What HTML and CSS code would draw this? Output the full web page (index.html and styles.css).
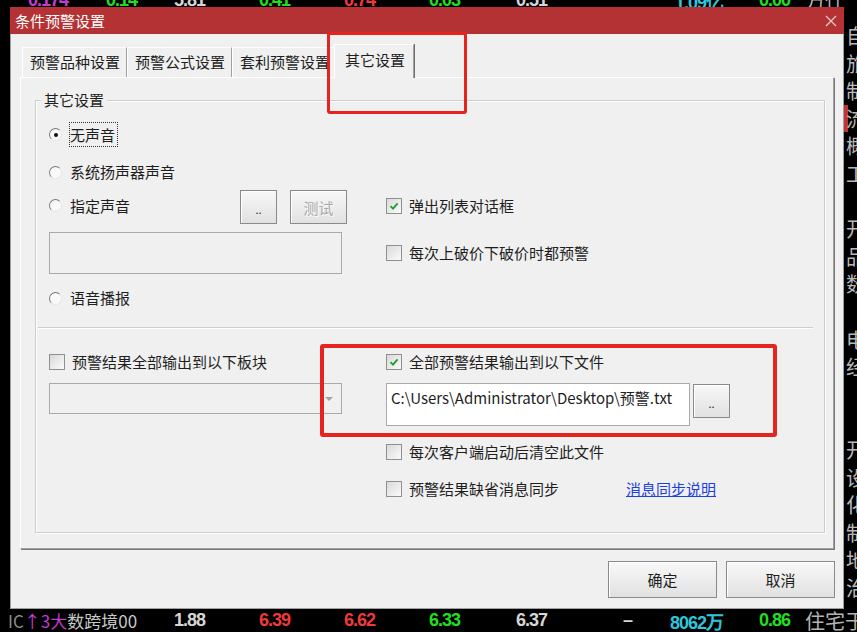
FILE: index.html
```html
<!DOCTYPE html>
<html lang="zh-CN">
<head>
    <meta charset="UTF-8">
    <meta name="viewport" content="width=device-width, initial-scale=1.0">
    <title>条件预警设置</title>

    <link rel="stylesheet" href="styles.css">
</head>
<body>

<!-- quote screen behind the dialog -->
<div class="market">
    <div class="quote-row quote-row--top">
        <span class="name"><span class="mag">0.174</span><span class="grn name__extra">0.14</span></span>
        <span>5.81</span>
        <span class="grn">0.41</span>
        <span class="red">0.74</span>
        <span class="grn">0.03</span>
        <span>0.51</span>
        <span></span>
        <span class="cyan">1.09亿</span>
        <span class="grn">0.00</span>
        <span class="note">万仕</span>
    </div>

    <div class="market__middle">
        <div class="news">
            <div>自</div>
            <div>旅</div>
            <div>制</div>
            <div class="news__sel">流</div>
            <div>概</div>
            <div>工</div>
            <div></div>
            <div>开</div>
            <div>品</div>
            <div>数</div>
            <div></div>
            <div>电</div>
            <div>经</div>
            <div></div>
            <div></div>
            <div>开</div>
            <div>设</div>
            <div>化</div>
            <div>制</div>
            <div>地</div>
            <div>治</div>
        </div>
    </div>

    <div class="quote-row quote-row--bottom">
        <span class="name"><span class="wm">IC</span><span class="mag">↑3大</span>数跨境00</span>
        <span>1.88</span>
        <span class="red">6.39</span>
        <span class="red">6.62</span>
        <span class="grn">6.33</span>
        <span>6.37</span>
        <span>–</span>
        <span class="cyan">8062万</span>
        <span class="grn">0.86</span>
        <span class="note">住宅于</span>
    </div>
</div>

<div class="dialog">
    <div class="dialog__title">
        <span>条件预警设置</span>
        <svg class="dialog__close" viewBox="0 0 12 12" width="12" height="12">
            <path d="M1 1 L11 11 M11 1 L1 11" stroke="#f3cccc" stroke-width="1.2" fill="none"/>
        </svg>
    </div>

    <div class="dialog__body">
        <div class="tabs">
            <div class="tab">预警品种设置</div>
            <div class="tab">预警公式设置</div>
            <div class="tab">套利预警设置</div>
            <div class="tab tab--active">其它设置</div>
        </div>

        <div class="panel">
            <div class="group">
                <div class="group__title">其它设置</div>

                <div class="pane">
                    <div class="col">
                        <div class="row row--first">
                            <span class="radio radio--on"></span>
                            <span class="focus">无声音</span>
                        </div>
                        <div class="row row--speaker">
                            <span class="radio"></span>
                            <span>系统扬声器声音</span>
                        </div>
                        <div class="row row--file-sound">
                            <span class="radio"></span>
                            <span class="row__label">指定声音</span>
                            <button class="btn btn--dots">..</button>
                            <button class="btn btn--test">测试</button>
                        </div>
                        <div class="memo"></div>
                        <div class="row row--voice">
                            <span class="radio"></span>
                            <span>语音播报</span>
                        </div>
                    </div>

                    <div class="col">
                        <div class="row row--popup">
                            <span class="check"><svg viewBox="0 0 10 10" width="10" height="10"><path d="M1.5 5.2 L4 7.6 L8.6 2.4" stroke="#1f9d2a" stroke-width="1.8" fill="none"/></svg></span>
                            <span>弹出列表对话框</span>
                        </div>
                        <div class="row row--cross">
                            <span class="check"></span>
                            <span>每次上破价下破价时都预警</span>
                        </div>
                    </div>
                </div>

                <div class="divider"></div>

                <div class="pane">
                    <div class="col">
                        <div class="row row--out">
                            <span class="check"></span>
                            <span>预警结果全部输出到以下板块</span>
                        </div>
                        <div class="combo"></div>
                    </div>

                    <div class="col">
                        <div class="row row--out">
                            <span class="check"><svg viewBox="0 0 10 10" width="10" height="10"><path d="M1.5 5.2 L4 7.6 L8.6 2.4" stroke="#1f9d2a" stroke-width="1.8" fill="none"/></svg></span>
                            <span>全部预警结果输出到以下文件</span>
                        </div>
                        <div class="file">
                            <div class="file__path">C:\Users\Administrator\Desktop\预警.txt</div>
                            <button class="btn btn--dots">..</button>
                        </div>
                        <div class="row row--clear">
                            <span class="check"></span>
                            <span>每次客户端启动后清空此文件</span>
                        </div>
                        <div class="row row--sync">
                            <span class="check"></span>
                            <span>预警结果缺省消息同步</span>
                            <a class="link" href="#">消息同步说明</a>
                        </div>
                    </div>
                </div>
            </div>
        </div>

        <div class="actions">
            <button class="btn btn--dialog">确定</button>
            <button class="btn btn--dialog">取消</button>
        </div>
    </div>
</div>

<!-- red marks drawn over the screenshot -->
<div class="mark mark--tab"></div>
<div class="mark mark--file"></div>

</body>
</html>
```

FILE: styles.css
```css
*,
*::before,
*::after {
  box-sizing: border-box;
}

body {
  margin: 0;
  width: 857px;
  height: 632px;
  overflow: hidden;
  position: relative;
  background: #000;
  font-family: "Noto Sans CJK SC", "Microsoft YaHei", sans-serif;
}

/* quote screen */

.market {
  height: 632px;
  display: flex;
  flex-direction: column;
}

.quote-row {
  flex: none;
  height: 22px;
  display: grid;
  grid-template-columns: 140px 65px 85px 85px 85px 87px 85px 91px 67px 1fr;
  align-items: center;
  font-family: "Liberation Sans", Arial, sans-serif;
  font-weight: bold;
  font-size: 18px;
  letter-spacing: -1px;
  color: #d6d6d6;
  white-space: nowrap;
}

.quote-row--top {
  margin-top: -14px;
}

.quote-row--bottom {
  margin-bottom: 4px;
}

.quote-row > span {
  text-align: right;
}

.quote-row > .name {
  text-align: left;
  padding-left: 8px;
  font-family: "Noto Sans CJK SC", sans-serif;
  font-weight: normal;
  font-size: 17px;
  letter-spacing: 0;
  color: #c8c8c8;
}

.quote-row--top > .name {
  padding-left: 28px;
  font-family: "Liberation Sans", Arial, sans-serif;
  font-weight: bold;
  font-size: 18px;
  letter-spacing: -1px;
}

.name__extra {
  margin-left: 38px;
}

.quote-row > .note {
  text-align: left;
  padding-left: 15px;
  font-family: "Noto Sans CJK SC", sans-serif;
  font-weight: normal;
  font-size: 20px;
  letter-spacing: 0;
  color: #b4b4b4;
}

.wm {
  color: #8c8c8c;
}

.mag {
  color: #c23ccf;
}

.grn {
  color: #1fe01f;
}

.red {
  color: #f03a3a;
}

.cyan {
  color: #2ec6dc;
}

.market__middle {
  flex: 1;
  display: flex;
  justify-content: flex-end;
}

.news {
  width: 13px;
  overflow: hidden;
  padding-top: 14px;
  font-size: 20px;
  line-height: 27.6px;
  color: #b8b8b8;
  white-space: nowrap;
}

.news div {
  height: 27.6px;
  padding-left: 2px;
}

.news .news__sel {
  box-shadow: inset 4px 0 #c03434;
}

/* dialog */

.dialog {
  position: absolute;
  left: 10px;
  top: 7px;
  width: 834px;
  height: 602px;
  display: flex;
  flex-direction: column;
}

.dialog__title {
  flex: none;
  height: 27px;
  background: #b43234;
  color: #fff;
  font-size: 15px;
  display: flex;
  align-items: center;
  justify-content: space-between;
  padding: 0 7px 0 5px;
}

.dialog__body {
  flex: 1;
  background: #f0f0f0;
  border: 1px solid #a0a0a0;
  border-top: 0;
  padding: 10px 9px 0;
  color: #1e1e1e;
  font-size: 15px;
}

.tabs {
  display: flex;
  align-items: flex-end;
  height: 33px;
  padding-left: 2px;
}

.tab {
  height: 30px;
  padding: 0 6px 0 7px;
  border: 1px solid;
  border-color: #fff #a0a0a0 transparent #fff;
  border-bottom: 0;
  line-height: 28px;
  white-space: nowrap;
}

.tab--active {
  position: relative;
  z-index: 1;
  height: 34px;
  margin: 0 0 -1px -3px;
  padding: 4px 8px 0 10px;
  line-height: 22px;
  background: #f0f0f0;
  box-shadow: 1px 0 0 #6e6e6e;
}

.panel {
  height: 472px;
  border: 1px solid;
  border-color: #fff #a0a0a0 #a0a0a0 #fff;
  box-shadow: 1px 1px 0 #7a7a7a;
  padding: 22px 8px 15px 14px;
}

.group {
  height: 100%;
  border: 1px solid #cdcdcd;
  box-shadow: inset 1px 1px 0 #fff, 1px 1px 0 #fff;
  padding-left: 13px;
}

.group__title {
  width: fit-content;
  height: 20px;
  line-height: 20px;
  margin: -11px 0 0 -8px;
  padding: 0 3px;
  background: #f0f0f0;
}

.pane {
  display: grid;
  grid-template-columns: 337px 1fr;
  align-items: start;
}

.col {
  display: flex;
  flex-direction: column;
  align-items: flex-start;
}

.row {
  display: flex;
  align-items: center;
  height: 24px;
  line-height: 20px;
  white-space: nowrap;
}

.row--first {
  height: 25px;
  margin-top: 12px;
}

.row--speaker {
  margin-top: 13px;
}

.row--file-sound {
  height: 34px;
  margin-top: 6px;
}

.row__label {
  width: 170px;
  margin-top: -3px;
}

.row--voice {
  margin-top: 12px;
}

.row--popup {
  margin-top: 84px;
}

.row--cross {
  margin-top: 23px;
}

.row--out {
  margin-top: 21px;
}

.row--clear {
  margin-top: 14px;
}

.row--sync {
  margin-top: 13px;
}

.focus {
  height: 25px;
  line-height: 23px;
  margin-left: -1px;
  padding-right: 2px;
  border: 1px dotted #333;
}

.radio {
  flex: none;
  width: 13px;
  height: 13px;
  margin-right: 8px;
  border-radius: 50%;
  border: 1px solid;
  border-color: #7a7a7a #e6e6e6 #e6e6e6 #7a7a7a;
  background: #f9f9f9;
  display: grid;
  place-items: center;
}

.row--file-sound .radio {
  margin-top: -3px;
}

.radio--on::after {
  content: "";
  width: 4px;
  height: 4px;
  border-radius: 50%;
  background: #111;
}

.check {
  flex: none;
  width: 16px;
  height: 16px;
  margin-right: 7px;
  border: 1px solid #8e8f8f;
  background: linear-gradient(135deg, #d9d9d9, #fbfbfb);
  display: grid;
  place-items: center;
}

.btn {
  padding: 0;
  border: 1px solid #8a8a8a;
  background: linear-gradient(#f8f8f8, #e1e1e1);
  box-shadow: inset 1px 1px 0 #fff;
  font-family: inherit;
  font-size: 15px;
  color: #1e1e1e;
  display: grid;
  place-items: center;
}

.btn--dots {
  width: 37px;
  height: 34px;
  font-size: 11px;
  padding-top: 4px;
}

.btn--test {
  width: 57px;
  height: 34px;
  margin-left: 13px;
  color: #a8a8a8;
  text-shadow: 1px 1px 0 #fff;
}

.btn--dialog {
  width: 109px;
  height: 37px;
}

.memo {
  width: 293px;
  height: 42px;
  margin-top: 8px;
  border: 1px solid #a9a9a9;
  background: #f0f0f0;
}

.divider {
  width: 775px;
  margin: 17px 0 0 -11px;
  border-top: 1px solid #cdcdcd;
  border-bottom: 1px solid #fff;
}

.combo {
  width: 293px;
  height: 31px;
  margin-top: 9px;
  border: 1px solid #a9a9a9;
  display: flex;
  justify-content: flex-end;
  align-items: center;
  padding-right: 8px;
}

.combo::after {
  content: "";
  border: 4px solid transparent;
  border-top-color: #a3a3a3;
  border-bottom: 0;
}

.file {
  display: flex;
  align-items: flex-start;
  margin-top: 9px;
}

.file__path {
  width: 304px;
  height: 43px;
  padding: 3px 4px;
  border: 1px solid #a9a9a9;
  background: #fff;
  line-height: 22px;
  white-space: nowrap;
  overflow: hidden;
}

.file .btn {
  margin: 1px 0 0 3px;
}

.link {
  margin-left: 67px;
  color: #1c3fe0;
  text-decoration: underline;
}

.actions {
  display: flex;
  justify-content: flex-end;
  gap: 9px;
  padding-top: 12px;
  margin-right: -1px;
}

/* red marks */

.mark {
  position: absolute;
  border: 3px solid #e5231f;
  border-radius: 3px;
}

.mark--tab {
  left: 327px;
  top: 32px;
  width: 140px;
  height: 82px;
}

.mark--file {
  left: 320px;
  top: 344px;
  width: 457px;
  height: 93px;
  border-width: 4px;
}
```
